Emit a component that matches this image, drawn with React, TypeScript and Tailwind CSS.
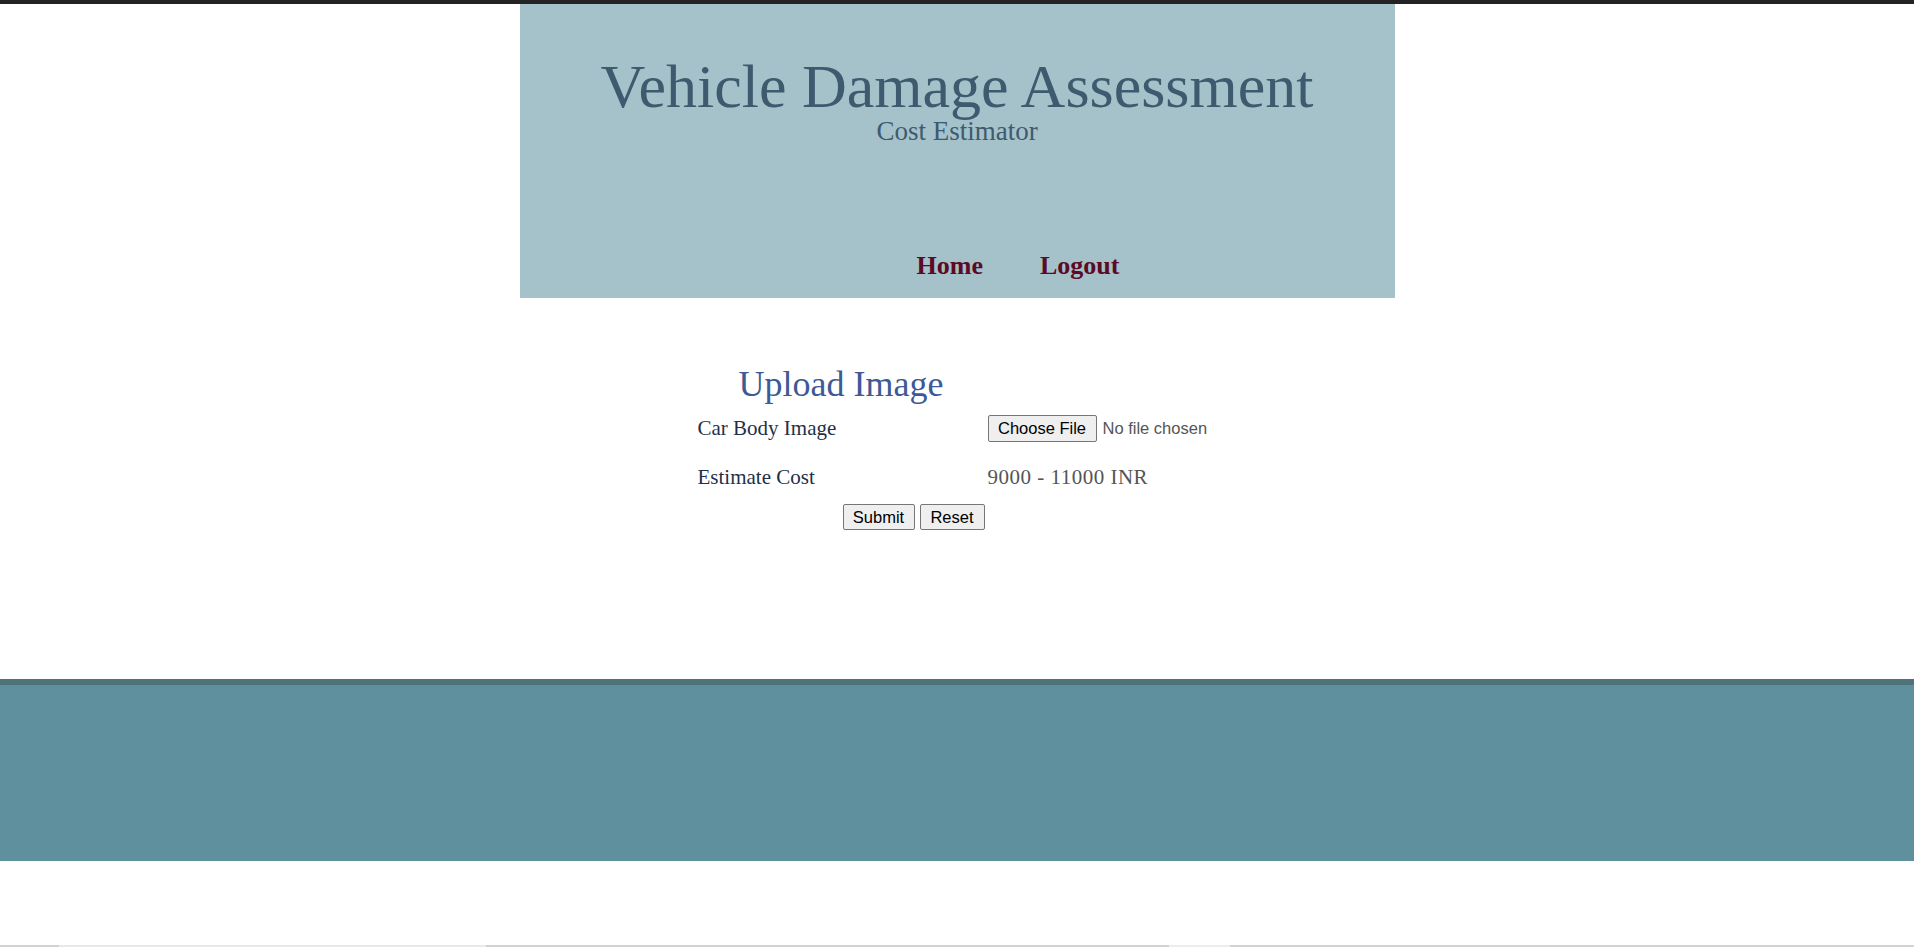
export default function App() {
  const serif = { fontFamily: '"Liberation Serif", "Times New Roman", serif' };
  const sans = { fontFamily: '"Liberation Sans", Arial, sans-serif' };

  return (
    <div className="flex h-[947px] flex-col overflow-hidden bg-white" style={serif}>
      <div className="h-[4px] bg-[#232323]" />

      <header className="mx-auto flex h-[294px] w-[875px] flex-col items-center bg-[#a5c1c9] pt-[53px]">
        <h1 className="text-[62px] leading-[58px] font-normal text-[#3e5a6e]">Vehicle Damage Assessment</h1>
        <p className="mt-[3px] text-[27px] leading-none text-[#3e5a6e]">Cost Estimator</p>
        <nav className="mt-[108px] flex gap-[57px] pl-[122px] text-[26px] leading-none font-bold text-[#5c0a26]">
          <a href="#">Home</a>
          <a href="#">Logout</a>
        </nav>
      </header>

      <main className="mx-auto h-[381px] w-[875px] pt-[68px] pl-[178px]">
        <h2 className="pl-[41px] text-[36px] leading-none font-normal text-[#3d5a96]">Upload Image</h2>

        <div className="mt-[13px] flex items-start">
          <div className="mt-[3px] w-[290px] text-[21px] leading-none text-[#1f3049]">Car Body Image</div>
          <div className="flex items-center" style={sans}>
            <button className="h-[27px] w-[109px] rounded-[2px] border border-[#767676] bg-[#efefef] text-[16.5px] text-black">
              Choose File
            </button>
            <span className="ml-[6px] text-[16.5px] text-[#555]">No file chosen</span>
          </div>
        </div>

        <div className="mt-[25px] flex items-start">
          <div className="w-[290px] text-[21px] leading-none text-[#1f3049]">Estimate Cost</div>
          <div className="text-[21px] leading-none tracking-[0.5px] text-[#555]">9000 - 11000 INR</div>
        </div>

        <div className="mt-[16px] flex gap-[5px] pl-[145px]" style={sans}>
          <button className="h-[26px] w-[72px] rounded-[2px] border border-[#767676] bg-[#efefef] text-[16.5px] text-black">
            Submit
          </button>
          <button className="h-[26px] w-[65px] rounded-[2px] border border-[#767676] bg-[#efefef] text-[16.5px] text-black">
            Reset
          </button>
        </div>
      </main>

      <footer className="h-[182px] border-t-[6px] border-[#4e7379] bg-[#5f909e]" />

      <div className="h-[84px]" />
      <div className="flex h-[2px] bg-[#d2d2d2]">
        <div className="ml-[59px] w-[427px] bg-[#e8e8e8]" />
        <div className="ml-[683px] w-[61px] bg-[#ececec]" />
      </div>
    </div>
  );
}
